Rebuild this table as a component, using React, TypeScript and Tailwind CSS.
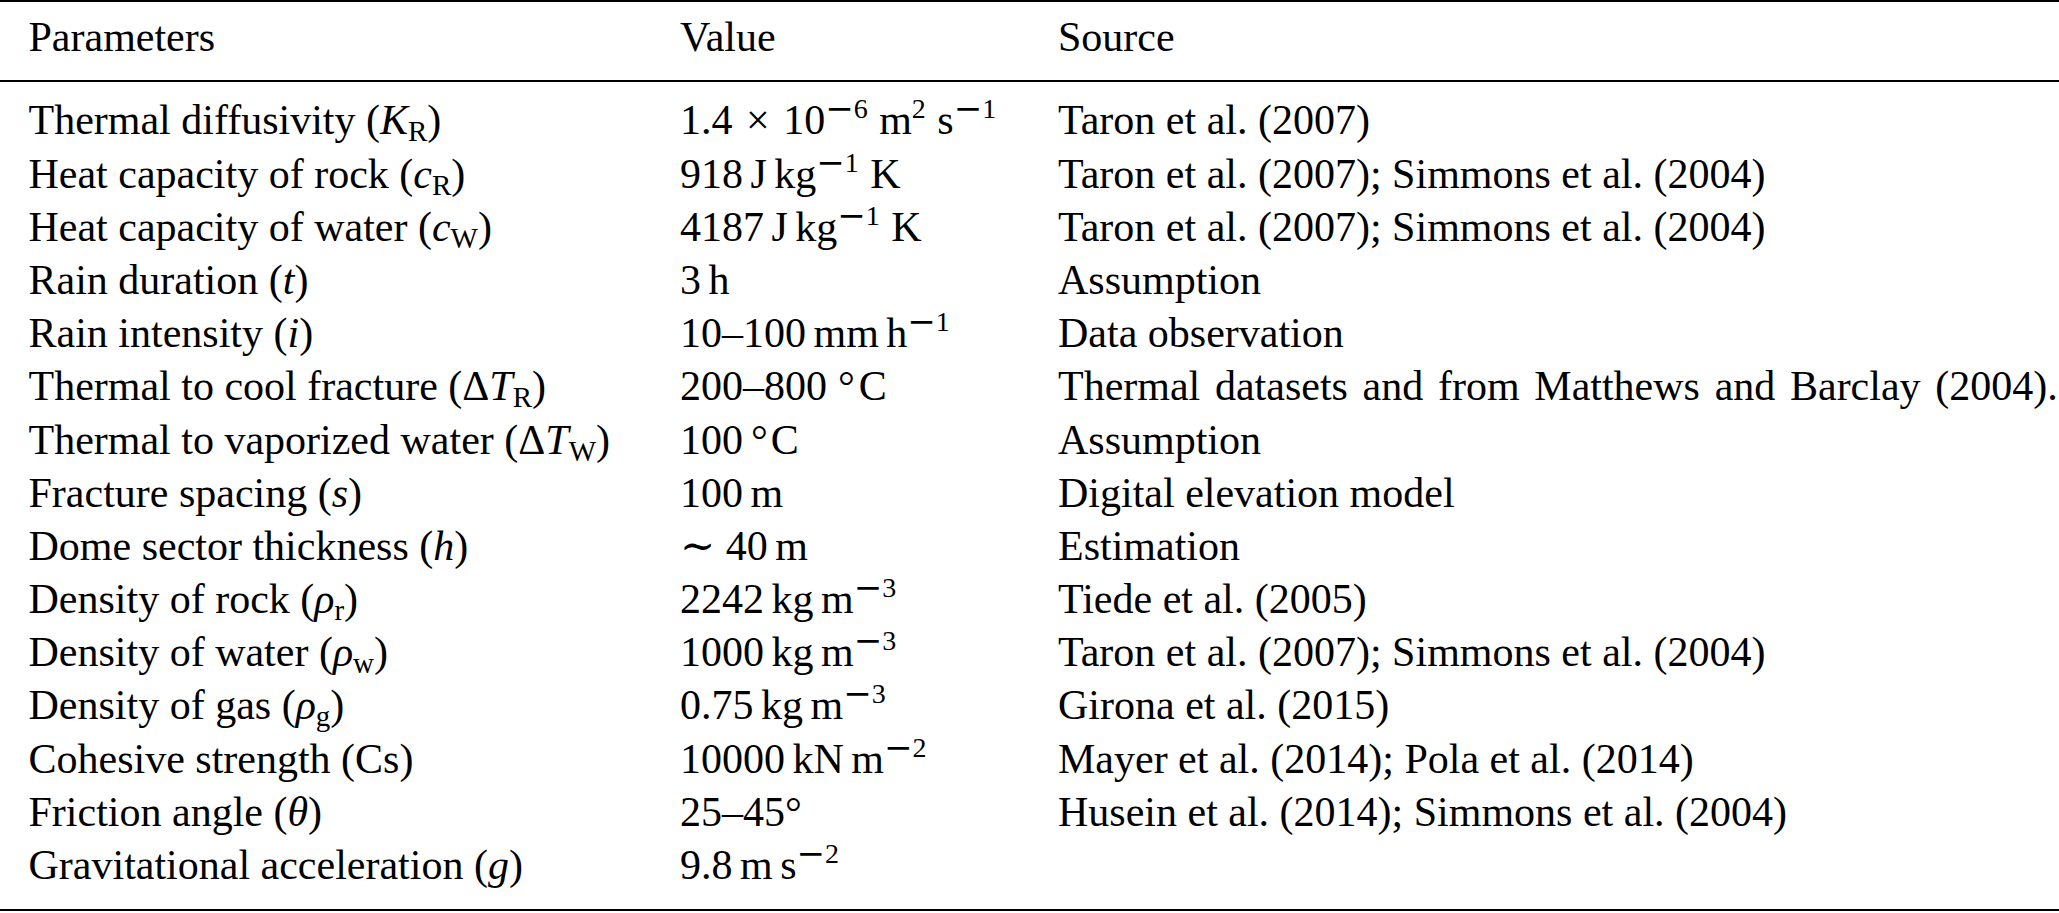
import React from 'react';

type Row = { name: React.ReactNode; value: React.ReactNode; source: string; wide?: boolean };

function Sup({ children }: { children: React.ReactNode }) {
  return <span className="text-[28px] leading-none align-[16px] mr-[4px]">{children}</span>;
}

function Sub({ children }: { children: React.ReactNode }) {
  return <span className="text-[29px] leading-none align-[-7px]">{children}</span>;
}

// math minus, wider than the text one
function M() {
  return <span className="relative top-[2px] font-['DejaVu_Serif',serif] text-[34px] leading-[0px]">−</span>;
}

// thin space like LaTeX \,
function Th() {
  return <span className="inline-block w-[7.5px]" />;
}

const rows: Row[] = [
  {
    name: <>Thermal diffusivity (<i>K</i><Sub>R</Sub>)</>,
    value: <>1.4 <span className="mx-[3px]">×</span> 10<Sup><M />6</Sup><Th />m<Sup>2</Sup><Th />s<Sup><M />1</Sup></>,
    source: 'Taron et al. (2007)',
  },
  {
    name: <>Heat capacity of rock (<i>c</i><Sub>R</Sub>)</>,
    value: <>918<Th />J<Th />kg<Sup><M />1</Sup><Th />K</>,
    source: 'Taron et al. (2007); Simmons et al. (2004)',
  },
  {
    name: <>Heat capacity of water (<i>c</i><Sub>W</Sub>)</>,
    value: <>4187<Th />J<Th />kg<Sup><M />1</Sup><Th />K</>,
    source: 'Taron et al. (2007); Simmons et al. (2004)',
  },
  { name: <>Rain duration (<i>t</i>)</>, value: <>3<Th />h</>, source: 'Assumption' },
  {
    name: <>Rain intensity (<i>i</i>)</>,
    value: <>10–100<Th />mm<Th />h<Sup><M />1</Sup></>,
    source: 'Data observation',
  },
  {
    name: <>Thermal to cool fracture (Δ<i>T</i><Sub>R</Sub>)</>,
    value: <>200–800<span className="ml-[11px]">°</span><span className="ml-[4px]">C</span></>,
    source: 'Thermal datasets and from Matthews and Barclay (2004).',
    wide: true,
  },
  {
    name: <>Thermal to vaporized water (Δ<i>T</i><Sub>W</Sub>)</>,
    value: <>100<span className="ml-[8px]">°</span><span className="ml-[3px]">C</span></>,
    source: 'Assumption',
  },
  { name: <>Fracture spacing (<i>s</i>)</>, value: <>100<Th />m</>, source: 'Digital elevation model' },
  { name: <>Dome sector thickness (<i>h</i>)</>, value: <>∼ 40<Th />m</>, source: 'Estimation' },
  {
    name: <>Density of rock (<i>ρ</i><Sub>r</Sub>)</>,
    value: <>2242<Th />kg<Th />m<Sup><M />3</Sup></>,
    source: 'Tiede et al. (2005)',
  },
  {
    name: <>Density of water (<i>ρ</i><Sub>w</Sub>)</>,
    value: <>1000<Th />kg<Th />m<Sup><M />3</Sup></>,
    source: 'Taron et al. (2007); Simmons et al. (2004)',
  },
  {
    name: <>Density of gas (<i>ρ</i><Sub>g</Sub>)</>,
    value: <>0.75<Th />kg<Th />m<Sup><M />3</Sup></>,
    source: 'Girona et al. (2015)',
  },
  {
    name: <>Cohesive strength (Cs)</>,
    value: <>10000<Th />kN<Th />m<Sup><M />2</Sup></>,
    source: 'Mayer et al. (2014); Pola et al. (2014)',
  },
  {
    name: <>Friction angle (<i>θ</i>)</>,
    value: <>25–45°</>,
    source: 'Husein et al. (2014); Simmons et al. (2004)',
  },
  {
    name: <>Gravitational acceleration (<i>g</i>)</>,
    value: <>9.8<Th />m<Th />s<Sup><M />2</Sup></>,
    source: '',
  },
];

export default function App() {
  return (
    <div className="w-[2059px] h-[913px] bg-white text-black font-['Liberation_Serif','Times_New_Roman','DejaVu_Serif',serif] text-[42px] leading-[53.2px]">
      <div className="h-[2px] bg-black" />
      <div className="grid grid-cols-[680px_378px_1fr] pt-[9.2px] pb-[15.3px] whitespace-nowrap">
        <div className="pl-[28.5px]">Parameters</div>
        <div>Value</div>
        <div>Source</div>
      </div>
      <div className="h-[2px] bg-black" />
      <div className="pt-[12.7px] pb-[16.8px]">
        {rows.map((r, i) => (
          <div key={i} className="grid grid-cols-[680px_378px_1fr] h-[53.2px] whitespace-nowrap">
            <div className="pl-[28.5px]">{r.name}</div>
            <div>{r.value}</div>
            <div className={r.wide ? '[word-spacing:4.2px]' : ''}>{r.source}</div>
          </div>
        ))}
      </div>
      <div className="h-[2px] bg-black" />
    </div>
  );
}
